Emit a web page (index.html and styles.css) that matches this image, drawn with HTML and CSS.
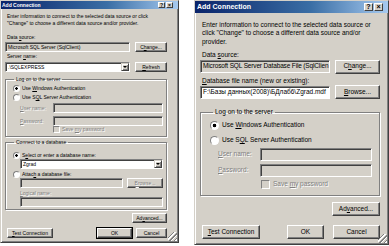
FILE: index.html
```html
<!DOCTYPE html>
<html lang="en">
<head>
    <meta charset="UTF-8">
    <title>Add Connection</title>
    <link rel="stylesheet" href="styles.css">
</head>
<body>

    <div class="dialog small">
        <div class="titlebar">
            <span>Add Connection</span>
            <span class="caps"><span class="cap">?</span><span class="cap">×</span></span>
        </div>
        <div class="pane">
            <p class="intro">Enter information to connect to the selected data source or click<br>"Change" to choose a different data source and/or provider.</p>
            <div class="label lbl-first">Data <u>s</u>ource:</div>
            <div class="row row-first">
                <div class="field readonly w-main"><span>Microsoft SQL Server (SqlClient)</span></div>
                <div class="btn w-side"><span>C<u>h</u>ange...</span></div>
            </div>
            <div class="label lbl-second">Server <u>n</u>ame:</div>
            <div class="row row-second">
                <div class="field combo w-main"><span class="value">.\SQLEXPRESS</span><span class="drop"></span></div>
                <div class="btn w-side"><span><u>R</u>efresh</span></div>
            </div>
            <fieldset class="group group-logon">
                <legend>Log on to the server</legend>
                <div class="radio on r-first"><span>Use <u>W</u>indows Authentication</span></div>
                <div class="radio r-second"><span>Use S<u>Q</u>L Server Authentication</span></div>
                <div class="cred cred-user"><span class="cred-label off"><u>U</u>ser name:</span><div class="field readonly"></div></div>
                <div class="cred cred-pass"><span class="cred-label off"><u>P</u>assword:</span><div class="field readonly"></div></div>
                <div class="check off"><span>Save <u>m</u>y password</span></div>
            </fieldset>
            <fieldset class="group group-db">
                <legend>Connect to a database</legend>
                <div class="radio on r-first"><span>S<u>e</u>lect or enter a database name:</span></div>
                <div class="field combo indent db-name"><span class="value">Zgrad</span><span class="drop"></span></div>
                <div class="radio r-attach"><span>Attac<u>h</u> a database file:</span></div>
                <div class="row indent">
                    <div class="field readonly w-file"></div>
                    <div class="btn off w-browse"><span><u>B</u>rowse...</span></div>
                </div>
                <div class="label off indent lbl-logical"><u>L</u>ogical name:</div>
                <div class="field readonly indent logical"></div>
            </fieldset>
            <div class="btn advanced"><span>Ad<u>v</u>anced...</span></div>
            <div class="footer">
                <div class="btn w-test"><span><u>T</u>est Connection</span></div>
                <div class="btn w-ok default">OK</div>
                <div class="btn w-cancel">Cancel</div>
            </div>
        </div>
        <div class="grip"></div>
    </div>

    <div class="dialog large">
        <div class="titlebar">
            <span>Add Connection</span>
            <span class="caps"><span class="cap">?</span><span class="cap">×</span></span>
        </div>
        <div class="pane">
            <p class="intro">Enter information to connect to the selected data source or<br>click "Change" to choose a different data source and/or<br>provider.</p>
            <div class="label lbl-first">Data <u>s</u>ource:</div>
            <div class="row row-first">
                <div class="field readonly w-main tight"><span>Microsoft SQL Server Database File (SqlClien</span></div>
                <div class="btn w-side"><span>C<u>h</u>ange...</span></div>
            </div>
            <div class="label lbl-second"><u>D</u>atabase file name (new or existing):</div>
            <div class="row row-second">
                <div class="field w-main"><span>F:\Базы данных(2008)\БДлаб6\Zgrad.mdf</span></div>
                <div class="btn w-side"><span><u>B</u>rowse...</span></div>
            </div>
            <fieldset class="group group-logon">
                <legend>Log on to the server</legend>
                <div class="radio on r-first"><span>Use <u>W</u>indows Authentication</span></div>
                <div class="radio r-second"><span>Use S<u>Q</u>L Server Authentication</span></div>
                <div class="cred cred-user"><span class="cred-label off"><u>U</u>ser name:</span><div class="field readonly"></div></div>
                <div class="cred cred-pass"><span class="cred-label off"><u>P</u>assword:</span><div class="field readonly"></div></div>
                <div class="check off"><span>Save <u>m</u>y password</span></div>
            </fieldset>
            <div class="btn advanced"><span>Ad<u>v</u>anced...</span></div>
            <div class="footer">
                <div class="btn w-test"><span><u>T</u>est Connection</span></div>
                <div class="btn w-ok">OK</div>
                <div class="btn w-cancel">Cancel</div>
            </div>
        </div>
        <div class="grip"></div>
    </div>

</body>
</html>
```

FILE: styles.css
```css
* {
    margin: 0;
    padding: 0;
    box-sizing: border-box;
}

body {
    background: #fff;
    display: flex;
    align-items: flex-start;
    font-family: "Liberation Sans", Arial, sans-serif;
    color: #000;
}

u {
    text-decoration-thickness: 0.5px;
}

/* window frame */
.dialog {
    position: relative;
    display: flex;
    flex-direction: column;
    background: #d4d0c8;
    border: 1px solid;
    border-color: #d4d0c8 #404040 #404040 #d4d0c8;
    box-shadow: inset 1px 1px #fff, inset -1px -1px #808080;
}

.small {
    width: 179px;
    height: 243px;
    font-size: 5px;
    line-height: 7px;
}

.large {
    width: 195px;
    height: 245px;
    margin-left: 15px;
    font-size: 6.5px;
    line-height: 8.5px;
}

.titlebar {
    display: flex;
    align-items: center;
    justify-content: space-between;
    background: linear-gradient(90deg, #0a246a 0%, #3a6ea5 60%, #a6caf0 100%);
    color: #fff;
    font-weight: bold;
}

.small .titlebar {
    height: 8px;
    padding: 0 5px 0 1px;
}

.large .titlebar {
    height: 12px;
    padding: 0 5px 0 2px;
    font-size: 7px;
}

.caps {
    display: flex;
    gap: 1px;
}

.cap {
    display: flex;
    align-items: center;
    justify-content: center;
    background: #d4d0c8;
    color: #000;
    border: 1px solid;
    border-color: #fff #404040 #404040 #fff;
}

.small .cap {
    width: 7px;
    height: 6px;
    font-size: 5px;
}

.large .cap {
    width: 9px;
    height: 8px;
    font-size: 7px;
}

.pane {
    display: flex;
    flex-direction: column;
}

.small .pane {
    padding: 0 11px 0 4px;
}

.large .pane {
    padding: 0 8px 0 5px;
}

.intro,
.label {
    padding-left: 2px;
    white-space: nowrap;
}

/* inputs */
.row {
    display: flex;
    align-items: center;
    justify-content: space-between;
}

.field {
    display: flex;
    align-items: center;
    background: #fff;
    border: 1px solid;
    border-color: #808080 #fff #fff #808080;
    box-shadow: inset 1px 1px #404040;
    white-space: nowrap;
    overflow: hidden;
    padding-left: 2px;
}

.field.readonly {
    background: #d4d0c8;
}

.field.tight {
    letter-spacing: -0.15px;
}

.field .value {
    flex: 1;
}

.drop {
    display: flex;
    align-items: center;
    justify-content: center;
    height: 100%;
    background: #d4d0c8;
    border: 1px solid;
    border-color: #d4d0c8 #404040 #404040 #d4d0c8;
    box-shadow: inset 1px 1px #fff, inset -1px -1px #808080;
}

.drop::after {
    content: "";
    border-top: 2px solid #000;
    border-left: 2px solid transparent;
    border-right: 2px solid transparent;
}

.small .drop {
    width: 8px;
}

.btn {
    display: flex;
    align-items: center;
    justify-content: center;
    flex: none;
    background: #d4d0c8;
    border: 1px solid;
    border-color: #fff #404040 #404040 #fff;
    box-shadow: inset -1px -1px #808080;
    white-space: nowrap;
}

.btn.default {
    outline: 1px solid #000;
}

.off {
    color: #808080;
    text-shadow: 1px 1px 0 #fff;
}

.small .field {
    height: 10px;
}

.small .btn {
    height: 10px;
}

.large .field {
    height: 13px;
}

.large .btn {
    height: 14px;
}

/* group boxes */
.group {
    display: flex;
    flex-direction: column;
    border: 1px solid #808080;
    box-shadow: 1px 1px 0 #fff, inset 1px 1px 0 #fff;
    min-width: 0;
}

.group legend {
    padding: 0 2px;
}

.small .group {
    padding: 0 3px 3px 7px;
}

.small .group legend {
    margin-left: 1px;
}

.large .group {
    padding: 0 7px 6px 9px;
}

.large .group legend {
    margin-left: 3px;
}

.radio,
.check {
    display: flex;
    align-items: center;
    white-space: nowrap;
}

.radio::before,
.check::before {
    content: "";
    flex: none;
    border: 1px solid;
    border-color: #808080 #fff #fff #808080;
    background: #fff;
}

.radio::before {
    border-radius: 50%;
}

.radio.on::before {
    background: radial-gradient(circle, #000 0 32%, #fff 42%);
}

.check::before {
    background: #d4d0c8;
}

.small .radio::before,
.small .check::before {
    width: 5px;
    height: 5px;
    margin-right: 2px;
}

.large .radio::before,
.large .check::before {
    width: 7px;
    height: 7px;
    margin-right: 3px;
}

.cred {
    display: flex;
    align-items: center;
}

.cred-label {
    flex: none;
}

.small .cred {
    padding-left: 7px;
}

.small .cred-label {
    width: 33px;
}

.small .cred .field {
    width: 110px;
}

.small .check {
    padding-left: 40px;
}

.large .cred {
    padding-left: 8px;
}

.large .cred-label {
    width: 42px;
}

.large .cred .field {
    width: 112px;
}

.large .check {
    padding-left: 51px;
}

.indent {
    margin-left: 7px;
}

.advanced {
    align-self: flex-end;
}

.footer {
    display: flex;
    align-items: center;
}

.footer .w-test {
    margin-left: 2px;
    margin-right: auto;
}

/* left dialog spacing */
.small .intro { margin-top: 4px; }
.small .lbl-first { margin-top: 7px; }
.small .row-first { margin-top: 1px; }
.small .lbl-second { margin-top: 1px; }
.small .row-second { margin-top: 2px; }
.small .w-main { width: 125px; }
.small .w-side { width: 32px; }
.small .group-logon { margin-top: 4px; }
.small .group-logon .r-first { margin-top: 2px; }
.small .group-logon .r-second { margin-top: 2px; }
.small .cred-user { margin-top: 2px; }
.small .cred-pass { margin-top: 3px; }
.small .group-db { margin-top: 2px; padding-bottom: 2px; }
.small .group-db .r-first { margin-top: 6px; }
.small .r-attach { margin-top: 2px; }
.small .w-file { width: 103px; }
.small .w-browse { width: 36px; }
.small .lbl-logical { margin-top: 1.5px; padding-left: 0; }
.small .logical { margin-top: 0.5px; }
.small .advanced { margin-top: 3px; width: 35px; }
.small .footer { margin-top: 5px; }
.small .w-test { width: 46px; }
.small .w-ok { width: 35px; margin-right: 4px; }
.small .w-cancel { width: 31px; }

/* right dialog spacing */
.large .intro { margin-top: 7.5px; }
.large .lbl-first { margin-top: 5px; }
.large .lbl-second { margin-top: 3px; }
.large .w-main { width: 130px; }
.large .w-side { width: 45px; }
.large .group-logon { margin-top: 9px; }
.large .group-logon .r-first { margin-top: 4.5px; }
.large .group-logon .r-second { margin-top: 5.5px; }
.large .cred-user { margin-top: 3.5px; }
.large .cred-pass { margin-top: 3px; }
.large .check { margin-top: 3px; }
.large .advanced { margin-top: 6px; width: 48px; }
.large .footer { margin-top: 9px; }
.large .w-test { width: 58px; }
.large .w-ok { width: 37px; margin-right: 9px; }
.large .w-cancel { width: 47px; }

/* resize grip sits over the corner */
.grip {
    position: absolute;
    right: 1px;
    bottom: 1px;
    width: 9px;
    height: 9px;
    background: linear-gradient(135deg, transparent 0 30%, #808080 30% 38%, #fff 38% 46%, transparent 46% 55%, #808080 55% 63%, #fff 63% 71%, transparent 71% 80%, #808080 80% 88%, #fff 88% 96%, transparent 96%);
}
```
